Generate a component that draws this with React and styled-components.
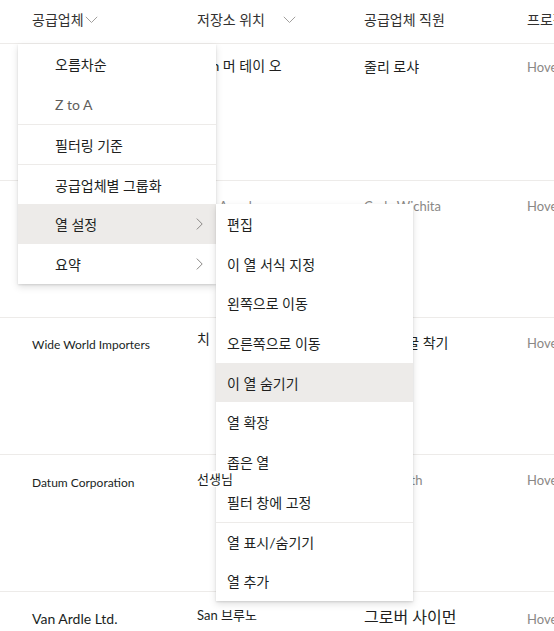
import React from 'react';
import styled, { createGlobalStyle } from 'styled-components';

const GlobalStyle = createGlobalStyle`
  html, body {
    margin: 0;
    padding: 0;
    background: #ffffff;
  }
  body {
    font-family: "Lato", "Noto Sans CJK KR", sans-serif;
    color: #323130;
  }
`;

const Page = styled.div`
  position: relative;
  width: 554px;
  height: 631px;
  overflow: hidden;
  background: #ffffff;
`;

const Grid = styled.div`
  display: grid;
  grid-template-columns: 197px 167px 163px 1fr;
`;

const HeaderRow = styled(Grid)`
  height: 43px;
  border-bottom: 1px solid #edebe9;
  align-items: center;
`;

const HeaderCell = styled.div`
  display: flex;
  align-items: center;
  padding-left: ${({ first }) => (first ? '32px' : '0')};
  font-size: 14px;
  line-height: 20px;
  white-space: nowrap;
  color: #323130;
  margin-top: -3px;
`;

const DownChevron = styled.svg`
  width: 13px;
  height: 8px;
  margin-left: ${({ gap }) => gap || 1}px;
  flex: none;
`;

const Row = styled(Grid)`
  height: 136px;
  border-bottom: 1px solid #edebe9;
`;

const Cell = styled.div`
  position: relative;
  z-index: ${({ raised }) => (raised ? 30 : 'auto')};
  padding-left: ${({ first }) => (first ? '32px' : '0')};
  padding-top: ${({ top }) => top ?? 14}px;
  font-size: ${({ size }) => size || 14}px;
  line-height: 20px;
  color: ${({ muted }) => (muted ? '#8a8886' : '#201f1e')};
  white-space: nowrap;
  overflow: hidden;
`;

const Snippet = styled.span`
  background: #ffffff;
`;

const Menu = styled.div`
  position: absolute;
  top: ${({ top }) => top}px;
  left: ${({ left }) => left}px;
  width: ${({ width }) => width}px;
  background: #ffffff;
  box-shadow: 0 3.2px 7.2px rgba(0, 0, 0, 0.13), 0 0.6px 1.8px rgba(0, 0, 0, 0.11);
  z-index: ${({ layer }) => layer};
`;

const Item = styled.div`
  display: flex;
  align-items: center;
  height: ${({ h }) => h}px;
  padding-left: 11px;
  padding-right: 13px;
  box-sizing: border-box;
  font-size: 14px;
  color: ${({ dim }) => (dim ? '#605e5c' : '#201f1e')};
  background: ${({ active }) => (active ? '#edebe9' : 'transparent')};
  border-top: ${({ divider }) => (divider ? '1px solid #edebe9' : 'none')};
  white-space: nowrap;
`;

const ItemLabel = styled.span`
  flex: 1;
  padding-left: ${({ indent }) => indent}px;
`;

const SideChevron = styled.svg`
  width: 7px;
  height: 12px;
  flex: none;
`;

const Chevron = ({ gap }) => (
  <DownChevron gap={gap} viewBox="0 0 13 8">
    <path d="M0.8 0.8 L6.5 6.5 L12.2 0.8" fill="none" stroke="#a19f9d" strokeWidth="1" />
  </DownChevron>
);

const Arrow = () => (
  <SideChevron viewBox="0 0 7 12">
    <path d="M0.8 0.6 L6.2 6 L0.8 11.4" fill="none" stroke="#8a8886" strokeWidth="1" />
  </SideChevron>
);

const mainItems = [
  { label: '오름차순' },
  { label: 'Z to A', dim: true },
  { label: '필터링 기준', divider: true },
  { label: '공급업체별 그룹화', divider: true },
  { label: '열 설정', sub: true, active: true },
  { label: '요약', sub: true },
];

const subItems = [
  { label: '편집' },
  { label: '이 열 서식 지정' },
  { label: '왼쪽으로 이동' },
  { label: '오른쪽으로 이동' },
  { label: '이 열 숨기기', active: true },
  { label: '열 확장' },
  { label: '좁은 열' },
  { label: '필터 창에 고정' },
  { label: '열 표시/숨기기', divider: true },
  { label: '열 추가' },
];

export default function App() {
  return (
    <Page>
      <GlobalStyle />
      <HeaderRow>
        <HeaderCell first>
          공급업체
          <Chevron gap={1} />
        </HeaderCell>
        <HeaderCell>
          저장소 위치
          <Chevron gap={18} />
        </HeaderCell>
        <HeaderCell>공급업체 직원</HeaderCell>
        <HeaderCell>프로젝트</HeaderCell>
      </HeaderRow>

      <Row>
        <Cell first top={13}>Contoso Ltd.</Cell>
        <Cell top={12}>San 머 테이 오</Cell>
        <Cell top={13}>줄리 로샤</Cell>
        <Cell muted size={13} top={13}>Hover to view</Cell>
      </Row>
      <Row>
        <Cell first top={15}>Fabrikam</Cell>
        <Cell muted size={13} top={15}>Los Angeles</Cell>
        <Cell muted size={13} top={15}>Cody Wichita</Cell>
        <Cell muted size={13} top={15}>Hover to view</Cell>
      </Row>
      <Row>
        <Cell first size={12} top={17}>Wide World Importers</Cell>
        <Cell top={11}>치</Cell>
        <Cell top={15}>로렌스 굴 착기</Cell>
        <Cell muted size={13} top={15}>Hover to view</Cell>
      </Row>
      <Row>
        <Cell first size={12} top={18}>Datum Corporation</Cell>
        <Cell raised size={13} top={14}><Snippet>선생님</Snippet></Cell>
        <Cell muted size={13} top={15}>Kim Smith</Cell>
        <Cell muted size={13} top={15}>Hover to view</Cell>
      </Row>
      <Row>
        <Cell first top={17}>Van Ardle Ltd.</Cell>
        <Cell size={13} top={13}>San 브루노</Cell>
        <Cell size={16} top={15}>그로버 사이먼</Cell>
        <Cell muted size={13} top={17}>Hover to view</Cell>
      </Row>

      <Menu top={44} left={18} width={198} layer={10}>
        {mainItems.map((it) => (
          <Item key={it.label} h={40} dim={it.dim} active={it.active} divider={it.divider}>
            <ItemLabel indent={26}>{it.label}</ItemLabel>
            {it.sub && <Arrow />}
          </Item>
        ))}
      </Menu>

      <Menu top={204} left={216} width={197} layer={11}>
        {subItems.map((it) => (
          <Item key={it.label} h={39.7} active={it.active} divider={it.divider}>
            <ItemLabel indent={0}>{it.label}</ItemLabel>
          </Item>
        ))}
      </Menu>
    </Page>
  );
}
